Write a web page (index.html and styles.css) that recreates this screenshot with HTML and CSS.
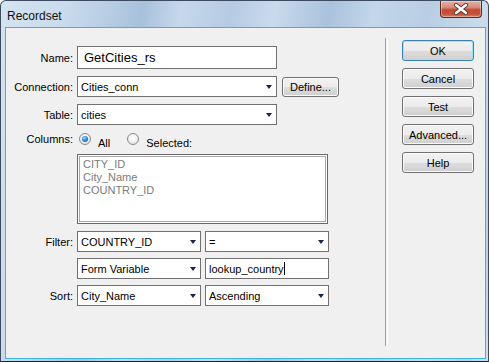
FILE: index.html
```html
<!DOCTYPE html>
<html>
<head>
<meta charset="utf-8">
<link rel="stylesheet" href="styles.css">
</head>
<body>
<div class="window">
  <div class="titlebar">
    <span class="title">Recordset</span>
    <div class="close">
      <svg width="16" height="12" viewBox="0 0 16 12">
        <path d="M3 2 L13 10 M13 2 L3 10" stroke="#5a3a36" stroke-width="4.2" stroke-linecap="round"/>
        <path d="M3 2 L13 10 M13 2 L3 10" stroke="#ffffff" stroke-width="2.4" stroke-linecap="round"/>
      </svg>
    </div>
  </div>
  <div class="client">
    <div class="form">
      <div class="row r-name">
        <label class="lbl">Name:</label>
        <div class="field input big">GetCities_rs</div>
      </div>
      <div class="row r-conn">
        <label class="lbl">Connection:</label>
        <div class="field combo"><span>Cities_conn</span><i class="arrow"></i></div>
        <button class="btn define">Define...</button>
      </div>
      <div class="row r-table">
        <label class="lbl">Table:</label>
        <div class="field combo"><span>cities</span><i class="arrow"></i></div>
      </div>
      <div class="row r-cols">
        <label class="lbl">Columns:</label>
        <div class="radios">
          <span class="radio checked"></span><span class="rtext">All</span>
          <span class="radio"></span><span class="rtext">Selected:</span>
        </div>
      </div>
      <div class="row r-list">
        <span class="lbl"></span>
        <div class="list">
          <div>CITY_ID</div>
          <div>City_Name</div>
          <div>COUNTRY_ID</div>
        </div>
      </div>
      <div class="row r-filter">
        <label class="lbl">Filter:</label>
        <div class="combo half"><span>COUNTRY_ID</span><i class="arrow"></i></div>
        <div class="combo half"><span>=</span><i class="arrow"></i></div>
      </div>
      <div class="row r-var">
        <span class="lbl"></span>
        <div class="combo half"><span>Form Variable</span><i class="arrow"></i></div>
        <div class="input half"><span>lookup_country</span><i class="caret"></i></div>
      </div>
      <div class="row r-sort">
        <label class="lbl">Sort:</label>
        <div class="combo half"><span>City_Name</span><i class="arrow"></i></div>
        <div class="combo half"><span>Ascending</span><i class="arrow"></i></div>
      </div>
    </div>
    <div class="sep"></div>
    <div class="buttons">
      <button class="btn side default">OK</button>
      <button class="btn side">Cancel</button>
      <button class="btn side">Test</button>
      <button class="btn side">Advanced...</button>
      <button class="btn side">Help</button>
    </div>
  </div>
</div>
</body>
</html>
```
FILE: styles.css
```css
html, body {
  margin: 0;
  padding: 0;
  background: #ffffff;
}
body {
  font-family: "Liberation Sans", Arial, sans-serif;
  font-size: 11px;
  color: #000;
}
.window {
  width: 489px;
  height: 362px;
  box-sizing: border-box;
  border: 1px solid #3d4b5e;
  border-bottom-color: #1a2433;
  border-radius: 6px 6px 0 0;
  background:
    linear-gradient(100deg,
      #d5e3f1 0%, #c9dbed 12%, #b7cde3 20%, #a7c1db 26%, #c6d8eb 33%,
      #b5cbe2 42%, #c9daec 50%, #a9c2dc 60%, #c3d6ea 68%, #b9cee4 78%,
      #c9daeb 88%, #bcd0e5 96%, #cfdeee 100%);
  display: flex;
  flex-direction: column;
  overflow: hidden;
}
.titlebar {
  height: 26px;
  flex: none;
  display: flex;
  align-items: flex-start;
  justify-content: space-between;
  position: relative;
}
.title {
  font-size: 12px;
  line-height: 14px;
  margin: 8px 0 0 6px;
  color: #111;
}
.close {
  width: 42px;
  height: 17px;
  margin: 0 6px 0 0;
  box-sizing: border-box;
  border: 1px solid #5d2a24;
  border-top: none;
  border-radius: 0 0 4px 4px;
  background: linear-gradient(#e6b1a6 0%, #d68b7c 40%, #c24a34 55%, #c5513a 80%, #d77a5e 100%);
  box-shadow: inset 0 0 0 1px rgba(255,255,255,0.35);
  display: flex;
  align-items: center;
  justify-content: center;
}
.close svg { display: block; }
.client {
  flex: 1;
  margin: 0 2px 2px 4px;
  background: #f0f0f0;
  border: 1px solid #8397ad;
  border-right-color: #39b4e6;
  border-bottom-color: #39b4e6;
  display: flex;
}
.form {
  width: 379px;
  flex: none;
  box-sizing: border-box;
  padding-top: 18px;
  display: flex;
  flex-direction: column;
}
.row {
  display: flex;
  align-items: center;
}
.lbl {
  width: 67px;
  flex: none;
  text-align: right;
  margin-right: 4px;
  line-height: 14px;
}
.field {
  width: 200px;
  box-sizing: border-box;
}
.input, .combo {
  background: #fff;
  border: 1px solid #717171;
  box-sizing: border-box;
  display: flex;
  align-items: center;
  padding-left: 3px;
  position: relative;
}
.r-name { height: 23px; }
.r-name .input { height: 23px; }
.big {
  font-size: 13px;
  padding-left: 6px;
}
.r-conn { margin-top: 7px; height: 21px; }
.r-conn .combo, .r-table .combo { height: 21px; }
.r-table { margin-top: 7px; height: 21px; }
.combo span, .input span { line-height: 14px; }
.combo .arrow {
  position: absolute;
  right: 4px;
  top: 8px;
  width: 0;
  height: 0;
  border-left: 3.5px solid transparent;
  border-right: 3.5px solid transparent;
  border-top: 4px solid #1a2352;
}
.caret {
  display: inline-block;
  width: 1px;
  height: 13px;
  background: #000;
  margin-left: 0;
}
.btn {
  font-family: "Liberation Sans", Arial, sans-serif;
  font-size: 11px;
  color: #000;
  border: 1px solid #707070;
  border-radius: 3px;
  background: linear-gradient(#f2f2f2 0%, #ebebeb 50%, #dddddd 51%, #cfcfcf 100%);
  box-shadow: inset 0 0 0 1px #fbfbfb;
  padding: 0;
  margin: 0;
  box-sizing: border-box;
  line-height: 14px;
}
.define {
  width: 57px;
  height: 20px;
  margin-left: 5px;
}
.r-cols {
  margin-top: 7px;
  height: 16px;
  align-items: flex-start;
}
.r-cols .lbl { margin-top: 0; }
.radios {
  display: flex;
  align-items: flex-start;
  padding-left: 2px;
}
.radio {
  width: 12px;
  height: 12px;
  box-sizing: border-box;
  border-radius: 50%;
  border: 1px solid #8a8a8a;
  background: radial-gradient(circle at 50% 40%, #ffffff 0%, #f1f1f1 50%, #d4d4d4 100%);
  position: relative;
  margin-top: 1px;
}
.radio.checked::after {
  content: "";
  position: absolute;
  left: 2px;
  top: 2px;
  width: 6px;
  height: 6px;
  border-radius: 50%;
  background: radial-gradient(circle at 40% 35%, #9fdcff 0%, #2b8de0 45%, #0b4a94 100%);
}
.rtext {
  margin-top: 4px;
  line-height: 14px;
  margin-left: 7px;
  margin-right: 17px;
}
.r-list {
  margin-top: 6px;
  align-items: flex-start;
}
.list {
  width: 251px;
  height: 70px;
  box-sizing: border-box;
  background: #fff;
  border: 1px solid #6a6a6a;
  box-shadow: inset 0 0 0 1px #ffffff, inset 0 0 0 2px #a9a9a9;
  padding: 3px 0 0 5px;
  color: #7c7c7c;
  line-height: 13px;
}
.half {
  width: 124px;
  height: 21px;
  margin-right: 4px;
}
.r-filter { margin-top: 7px; }
.r-var { margin-top: 6px; }
.r-sort { margin-top: 6px; }
.sep {
  width: 1px;
  border-left: 1px solid #a0a0a0;
  border-right: 1px solid #ffffff;
  margin: 10px 0 12px 0;
}
.buttons {
  padding: 12px 0 0 14px;
  display: flex;
  flex-direction: column;
  gap: 7px;
}
.side {
  width: 72px;
  height: 21px;
}
.default {
  border-color: #3c7fb1;
  box-shadow: inset 0 0 0 1px #9ee3fa;
}
```
